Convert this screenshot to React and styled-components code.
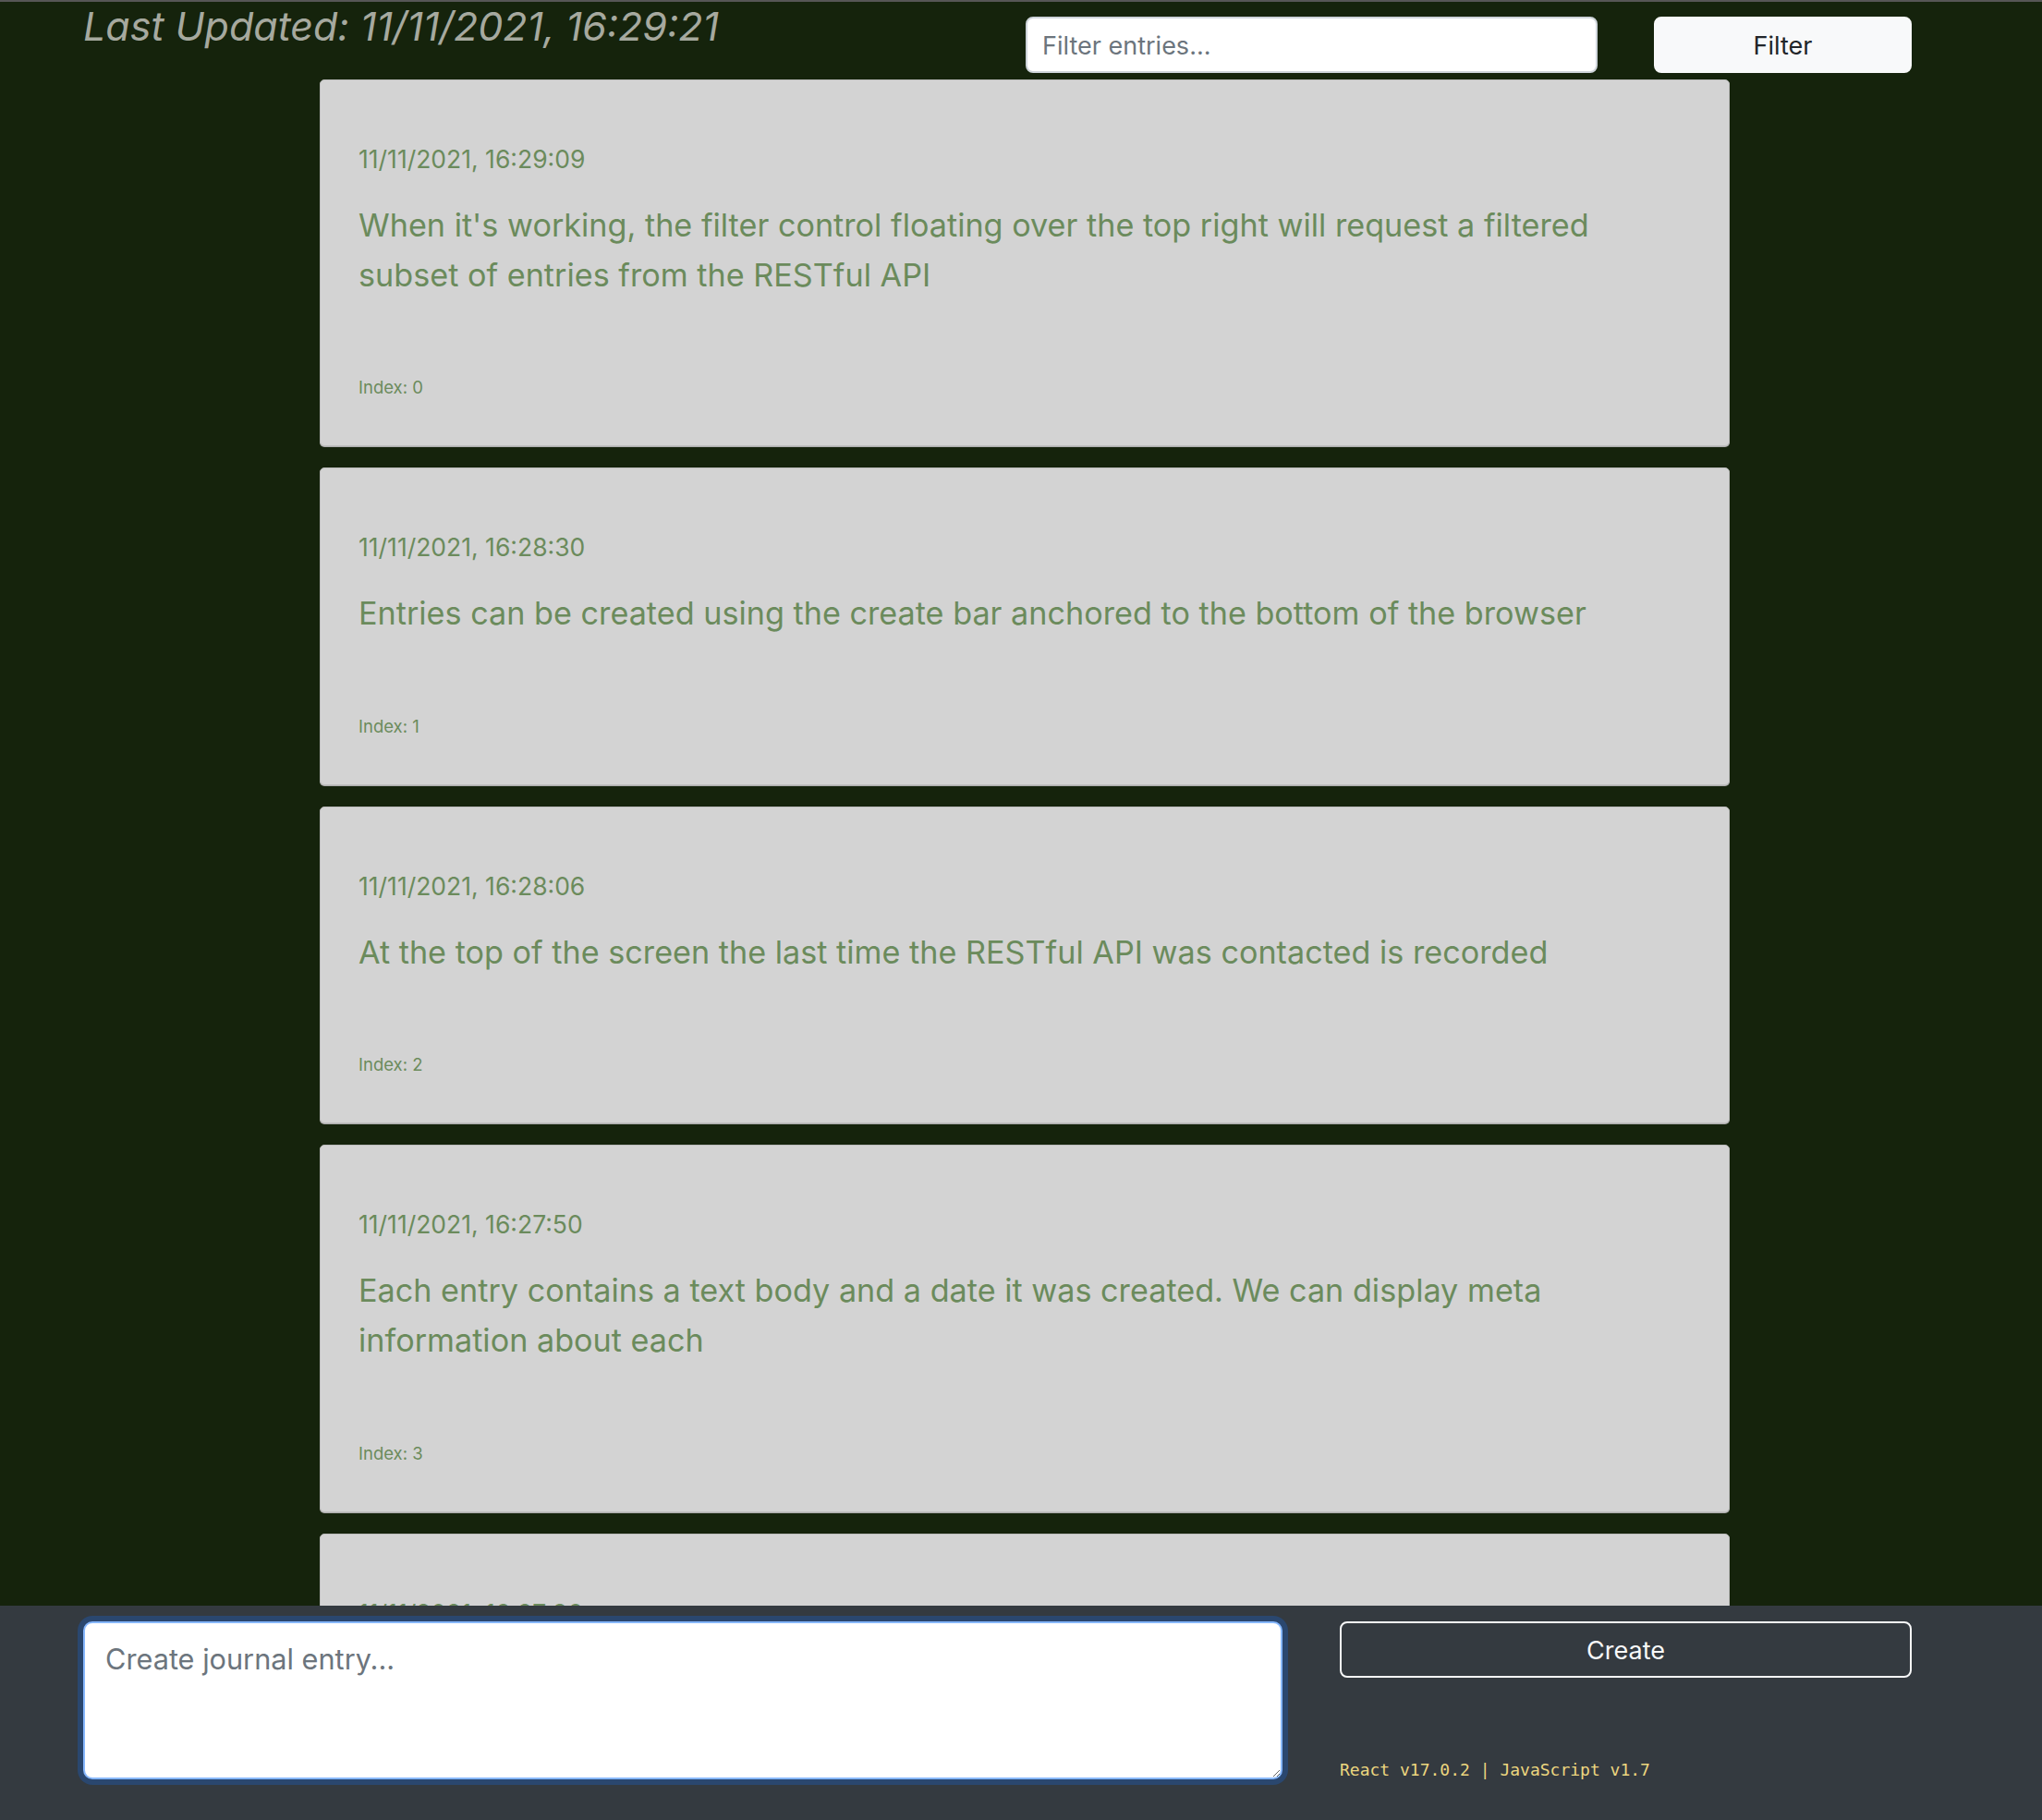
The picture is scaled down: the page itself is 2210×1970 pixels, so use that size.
import React from 'react'
import styled, { createGlobalStyle } from 'styled-components'

const GlobalStyle = createGlobalStyle`
  html, body {
    margin: 0;
    padding: 0;
    height: 100%;
    overflow: hidden;
  }
  body {
    background-color: #15230c;
    border-top: 2px solid #565656;
    box-sizing: border-box;
    font-family: Inter, 'Noto Sans', sans-serif;
  }
  * {
    box-sizing: border-box;
  }
`

const entries = [
  {
    date: '11/11/2021, 16:29:09',
    body: "When it's working, the filter control floating over the top right will request a filtered subset of entries from the RESTful API",
  },
  {
    date: '11/11/2021, 16:28:30',
    body: 'Entries can be created using the create bar anchored to the bottom of the browser',
  },
  {
    date: '11/11/2021, 16:28:06',
    body: 'At the top of the screen the last time the RESTful API was contacted is recorded',
  },
  {
    date: '11/11/2021, 16:27:50',
    body: 'Each entry contains a text body and a date it was created. We can display meta information about each',
  },
  {
    date: '11/11/2021, 16:27:36',
    body: 'Entries are listed newest first',
  },
]

const Header = styled.header`
  display: flex;
  align-items: flex-start;
  height: 84px;
  padding: 0 141px 0 90px;
`

const LastUpdated = styled.h2`
  margin: 0;
  font-size: 43px;
  line-height: 52px;
  font-weight: 400;
  font-style: italic;
  color: #a6a99f;
`

const FilterGroup = styled.div`
  display: flex;
  gap: 61px;
  margin-left: auto;
  margin-top: 16px;
`

const FilterInput = styled.input`
  width: 619px;
  height: 61px;
  padding: 2px 16px 0;
  border: 2px solid #ced4da;
  border-radius: 8px;
  background: #ffffff;
  font-family: Inter, sans-serif;
  font-size: 27px;
  color: #212529;
  outline: none;

  &::placeholder {
    color: #6c757d;
  }
`

const FilterButton = styled.button`
  width: 279px;
  height: 61px;
  padding-top: 3px;
  border: 2px solid #f8f9fa;
  border-radius: 8px;
  background: #f8f9fa;
  font-family: Inter, sans-serif;
  font-size: 27px;
  color: #212529;
`

const EntryList = styled.main`
  display: flex;
  flex-direction: column;
  gap: 23px;
  width: 1526px;
  margin-left: 346px;
`

const Card = styled.article`
  background: #d3d3d3;
  border: 1px solid #bdbdbd;
  border-radius: 5px;
  box-shadow: 0 1px 0 #aeaeae;
  padding: 66px 41px 49px;
  color: #6b8b5c;
`

const EntryDate = styled.div`
  font-size: 26.5px;
  line-height: 38px;
`

const EntryBody = styled.p`
  margin: 26px 0 82px;
  max-width: 1390px;
  font-size: 34.2px;
  line-height: 53.6px;
`

const EntryIndex = styled.div`
  font-size: 18.5px;
  line-height: 27px;
`

const CreateBar = styled.footer`
  position: fixed;
  left: 0;
  right: 0;
  bottom: 0;
  height: 232px;
  display: flex;
  gap: 62px;
  padding: 17px 141px 0 90px;
  background: #343a40;
`

const EntryTextarea = styled.textarea`
  width: 1298px;
  height: 171px;
  padding: 18px 22px;
  border: 2px solid #86b7fe;
  border-radius: 10px;
  box-shadow: 0 0 0 6px rgba(13, 110, 253, 0.25);
  background: #ffffff;
  font-family: Inter, sans-serif;
  font-size: 30.7px;
  line-height: 42px;
  color: #212529;
  outline: none;
  resize: vertical;

  &::placeholder {
    color: #6c757d;
  }
`

const CreateColumn = styled.div`
  display: flex;
  flex-direction: column;
  flex: 1;
`

const CreateButton = styled.button`
  height: 61px;
  padding-top: 3px;
  border: 2px solid #f8f9fa;
  border-radius: 8px;
  background: transparent;
  font-family: Inter, sans-serif;
  font-size: 27px;
  color: #f8f9fa;
`

const Versions = styled.div`
  margin-top: 87px;
  font-family: 'DejaVu Sans Mono', 'Liberation Mono', monospace;
  font-size: 18px;
  line-height: 26px;
  color: #ecd67f;
`

const Entry = ({ date, body, index }) => (
  <Card>
    <EntryDate>{date}</EntryDate>
    <EntryBody>{body}</EntryBody>
    <EntryIndex>Index: {index}</EntryIndex>
  </Card>
)

export default function App() {
  return (
    <>
      <GlobalStyle />
      <Header>
        <LastUpdated>Last Updated: 11/11/2021, 16:29:21</LastUpdated>
        <FilterGroup>
          <FilterInput type="text" placeholder="Filter entries..." />
          <FilterButton>Filter</FilterButton>
        </FilterGroup>
      </Header>
      <EntryList>
        {entries.map((e, i) => (
          <Entry key={i} date={e.date} body={e.body} index={i} />
        ))}
      </EntryList>
      <CreateBar>
        <EntryTextarea placeholder="Create journal entry..." />
        <CreateColumn>
          <CreateButton>Create</CreateButton>
          <Versions>React v17.0.2 | JavaScript v1.7</Versions>
        </CreateColumn>
      </CreateBar>
    </>
  )
}
